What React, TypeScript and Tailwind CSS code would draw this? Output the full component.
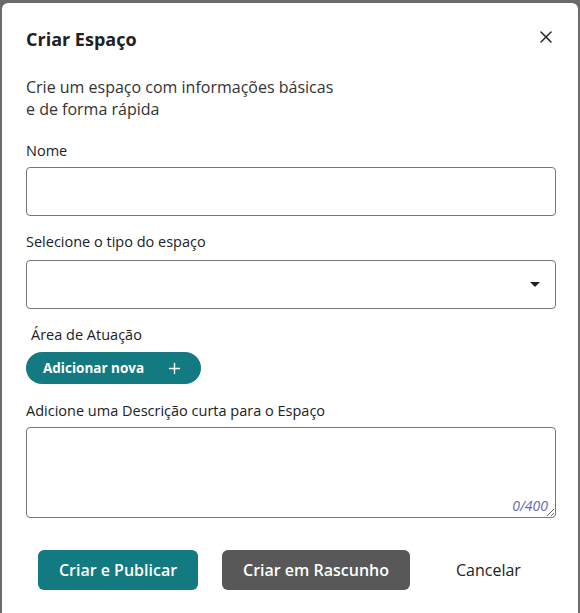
import { X, Plus } from 'lucide-react';

const font = { fontFamily: '"Open Sans", "Noto Sans", sans-serif' };

export default function App() {
  return (
    <div className="w-[580px] h-[613px] overflow-hidden bg-[#6b6b6b] pl-[2px] pt-[3px]" style={font}>
      <div className="w-[576px] h-[640px] bg-white rounded-tl-md rounded-tr-md pl-6 pr-[22px] pt-[24px] text-[#212121]">
        <div className="flex items-center justify-between">
          <h2 className="text-[18px] font-bold leading-6">Criar Espaço</h2>
          <button className="text-[#222] -mt-[4px]">
            <X size={20} strokeWidth={1.8} />
          </button>
        </div>

        <p className="mt-[25px] text-[16px] leading-[22px] text-[#333]">
          Crie um espaço com informações básicas
          <br />e de forma rápida
        </p>

        <label className="block mt-[21px] text-[14.5px] font-medium leading-5">Nome</label>
        <input className="mt-[6px] w-full h-[49px] border border-[#777] rounded-[4px] px-3 outline-none" />

        <label className="block mt-[16px] text-[14.5px] font-medium leading-5">Selecione o tipo do espaço</label>
        <div className="mt-[8px] w-full h-[49px] border border-[#777] rounded-[4px] flex items-center justify-end pr-[15px]">
          <svg width="10" height="6" viewBox="0 0 10 6">
            <path d="M0 0h10L5 5z" fill="#222" />
          </svg>
        </div>

        <label className="block mt-[16px] pl-[5px] text-[14.5px] font-medium leading-5">Área de Atuação</label>
        <button className="mt-[7px] h-[32px] w-[175px] rounded-full bg-[#127a80] text-white text-[13.5px] font-bold flex items-center pl-[17px] gap-[22px]">
          Adicionar nova
          <Plus size={17} strokeWidth={2} />
        </button>

        <label className="block mt-[17px] text-[14.5px] font-medium leading-5">Adicione uma Descrição curta para o Espaço</label>
        <div className="relative mt-[6px]">
          <textarea className="block w-full h-[91px] border border-[#777] rounded-[4px] px-3 py-2 outline-none resize-y" />
          <span className="absolute right-[8px] bottom-[2px] text-[14px] italic text-[#6a6aae]">0/400</span>
        </div>

        <div className="mt-[32px] flex items-center pl-[12px]">
          <button className="h-[40px] w-[160px] rounded-[6px] bg-[#127a80] text-white text-[16px] font-semibold">
            Criar e Publicar
          </button>
          <button className="ml-[24px] h-[40px] w-[188px] rounded-[6px] bg-[#585858] text-white text-[16px] font-semibold">
            Criar em Rascunho
          </button>
          <button className="ml-[46px] text-[16px] font-medium text-[#222]">Cancelar</button>
        </div>
      </div>
    </div>
  );
}
